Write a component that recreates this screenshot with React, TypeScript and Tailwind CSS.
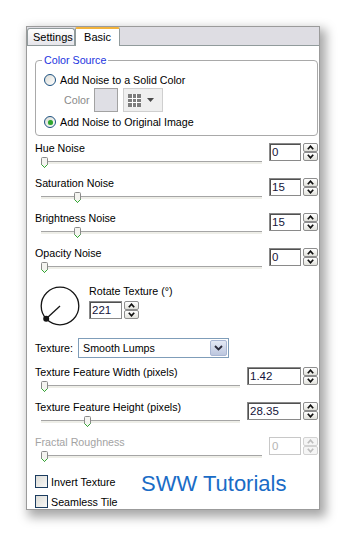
import React from 'react';

function Thumb({ left }: { left: number }) {
  return (
    <svg className="absolute top-[-5px]" style={{ left }} width="7" height="11" viewBox="0 0 7 11">
      <path d="M0.5 1.5Q0.5 0.5 1.5 0.5H5.5Q6.5 0.5 6.5 1.5V7.5L3.5 10.5L0.5 7.5Z" fill="#f4f4f0" stroke="#8a8a8a" />
      <path d="M0.5 7.5L3.5 10.5L6.5 7.5" fill="none" stroke="#31a831" />
    </svg>
  );
}

function Arrow({ up, disabled }: { up?: boolean; disabled?: boolean }) {
  return (
    <svg width="7" height="5" viewBox="0 0 7 5">
      <path
        d={up ? 'M0.8 4.2L3.5 1.2L6.2 4.2' : 'M0.8 0.8L3.5 3.8L6.2 0.8'}
        fill="none"
        stroke={disabled ? '#bdbdbd' : '#111'}
        strokeWidth="1.7"
      />
    </svg>
  );
}

function SpinBtn({ up, disabled }: { up?: boolean; disabled?: boolean }) {
  return (
    <div
      className={`flex h-[9px] items-center justify-center rounded-[2px] border ${
        disabled ? 'border-[#d2d2d2] bg-[#f5f5f5]' : 'border-[#8e8e8e] bg-gradient-to-b from-white to-[#e2e2dc]'
      }`}
    >
      <Arrow up={up} disabled={disabled} />
    </div>
  );
}

function SpinBox({ value, width, disabled }: { value: string; width: string; disabled?: boolean }) {
  return (
    <div className="flex shrink-0 gap-[2px]">
      <div
        className={`${width} h-[18px] border pl-[2px] text-[11.5px] leading-[16px] ${
          disabled ? 'border-[#c8c8c8] text-[#b5b5b5]' : 'border-[#8a8a8a] text-[#14143a] shadow-[inset_1px_1px_0_#505050]'
        }`}
      >
        {value}
      </div>
      <div className="flex w-[15px] flex-col">
        <SpinBtn up disabled={disabled} />
        <SpinBtn disabled={disabled} />
      </div>
    </div>
  );
}

function Slider({
  label,
  value,
  pos,
  width = 'w-[32px]',
  disabled,
}: {
  label: string;
  value: string;
  pos: number;
  width?: string;
  disabled?: boolean;
}) {
  return (
    <div className="flex h-[35px] items-start">
      <div className="flex min-w-0 flex-1 flex-col">
        <div className={`h-[12px] leading-[12px] ${disabled ? 'text-[#a3a3a3]' : ''}`}>{label}</div>
        <div className="relative ml-[6px] mr-[7px] mt-[7px] h-[3px] border-t border-[#a5a5a5] bg-[#eeeee8]">
          <Thumb left={pos} />
        </div>
      </div>
      <div className="mt-[1px]">
        <SpinBox value={value} width={width} disabled={disabled} />
      </div>
    </div>
  );
}

function Radio({ checked }: { checked?: boolean }) {
  return (
    <div className="flex h-[12px] w-[12px] shrink-0 items-center justify-center rounded-full border border-[#1c5180] bg-gradient-to-br from-[#dcdcd6] to-white">
      {checked && <div className="h-[5px] w-[5px] rounded-full bg-[#2fa52f] shadow-[0_0_1px_#7fd07f]" />}
    </div>
  );
}

function Checkbox({ label }: { label: string }) {
  return (
    <div className="flex h-[13px] items-center gap-[3px]">
      <div className="h-[13px] w-[13px] shrink-0 border border-[#1c3d60] bg-gradient-to-br from-[#dcdcd7] to-[#f8f8f6]" />
      <span className="leading-[12px]">{label}</span>
    </div>
  );
}

export default function App() {
  return (
    <div className="min-h-[535px] w-[345px] bg-white pl-[26px] pt-[26px] font-['Liberation_Sans',Arial,sans-serif] text-[10.7px] text-black">
      <div className="flex h-[484px] w-[294px] flex-col overflow-hidden border border-[#9b9b9b] bg-white shadow-[4px_5px_10px_2px_rgba(0,0,0,0.35)]">
        {/* Tabs */}
        <div className="flex h-[18px] shrink-0 items-end bg-[#dedde3]">
          <div className="flex h-[17px] w-[48px] items-center rounded-t-[3px] border border-b-0 border-[#919b9c] bg-gradient-to-b from-white to-[#e6e5ea] pl-[5px] text-[11px]">
            Settings
          </div>
          <div className="relative z-10 -mb-[1px] flex h-[19px] w-[45px] items-center justify-center rounded-t-[2px] border-x border-t-2 border-x-[#919b9c] border-t-[#f2b33c] bg-white text-[11px]">
            Basic
          </div>
        </div>

        {/* Page */}
        <div className="flex flex-1 flex-col border-t border-[#919b9c] pl-[8px] pr-[1px] pt-[8px]">
          <fieldset className="rounded-[4px] border border-[#a9a9a9] pb-[6px] pl-[8px] pt-[6px]">
            <legend className="-ml-[2px] px-[2px] leading-[13px] text-[#1c35e0]">Color Source</legend>
            <div className="flex h-[14px] items-center gap-[4px]">
              <Radio />
              <span>Add Noise to a Solid Color</span>
            </div>
            <div className="mt-[1px] flex h-[24px] items-center pl-[20px]">
              <span className="w-[30px] text-[#8a8a8a]">Color</span>
              <div className="h-[24px] w-[24px] border border-[#a2a2a2] bg-[#dfdfe5]" />
              <div className="ml-[5px] flex h-[24px] w-[40px] items-center gap-[6px] border border-[#cfcfcf] bg-[#efefef] pl-[4px]">
                <svg width="13" height="13" viewBox="0 0 13 13">
                  <rect width="13" height="13" fill="#7d7d7d" />
                  <path d="M4.5 0V13M8.5 0V13M0 4.5H13M0 8.5H13" stroke="#fff" />
                </svg>
                <svg width="7" height="4" viewBox="0 0 7 4">
                  <path d="M0 0H7L3.5 4Z" fill="#4a4a4a" />
                </svg>
              </div>
            </div>
            <div className="mt-[3px] flex h-[14px] items-center gap-[4px]">
              <Radio checked />
              <span>Add Noise to Original Image</span>
            </div>
          </fieldset>

          <div className="mt-[6px] flex flex-col">
            <Slider label="Hue Noise" value="0" pos={0} />
            <Slider label="Saturation Noise" value="15" pos={33} />
            <Slider label="Brightness Noise" value="15" pos={33} />
            <Slider label="Opacity Noise" value="0" pos={0} />
          </div>

          {/* Rotate dial */}
          <div className="flex items-start">
            <svg className="ml-[5px] mt-[4px] shrink-0" width="40" height="40" viewBox="0 0 40 40">
              <circle cx="20" cy="20" r="18.8" fill="none" stroke="#151515" strokeWidth="1.3" />
              <line x1="20" y1="20" x2="6.2" y2="32.8" stroke="#151515" strokeWidth="1.3" />
              <circle cx="6.2" cy="32.8" r="3" fill="#151515" />
            </svg>
            <div className="ml-[9px] flex flex-col">
              <div className="mt-[3px] h-[12px] leading-[12px]">Rotate Texture (°)</div>
              <div className="mt-[4px]">
                <SpinBox value="221" width="w-[33px]" />
              </div>
            </div>
          </div>

          {/* Texture dropdown */}
          <div className="mt-[12px] flex h-[20px] items-center">
            <span className="w-[43px] shrink-0">Texture:</span>
            <div className="flex h-[20px] w-[151px] items-center justify-between border border-[#7f9db9] bg-white pl-[4px] pr-[1px]">
              <span>Smooth Lumps</span>
              <div className="flex h-[16px] w-[17px] items-center justify-center rounded-[2px] border border-[#a9b6d3] bg-gradient-to-b from-[#e4e9f5] to-[#bcc6de]">
                <svg width="9" height="6" viewBox="0 0 9 6">
                  <path d="M1 1L4.5 4.5L8 1" fill="none" stroke="#2a2a3a" strokeWidth="1.8" />
                </svg>
              </div>
            </div>
          </div>

          <div className="mt-[8px] flex flex-col">
            <Slider label="Texture Feature Width (pixels)" value="1.42" pos={0} width="w-[54px]" />
            <Slider label="Texture Feature Height (pixels)" value="28.35" pos={43} width="w-[54px]" />
            <Slider label="Fractal Roughness" value="0" pos={0} disabled />
          </div>

          <div className="mt-[4px] flex items-start">
            <div className="flex w-[106px] shrink-0 flex-col gap-[7px]">
              <Checkbox label="Invert Texture" />
              <Checkbox label="Seamless Tile" />
            </div>
            <span className="text-[22px] leading-[18px] text-[#1a6cc6]">SWW Tutorials</span>
          </div>
        </div>
      </div>
    </div>
  );
}
